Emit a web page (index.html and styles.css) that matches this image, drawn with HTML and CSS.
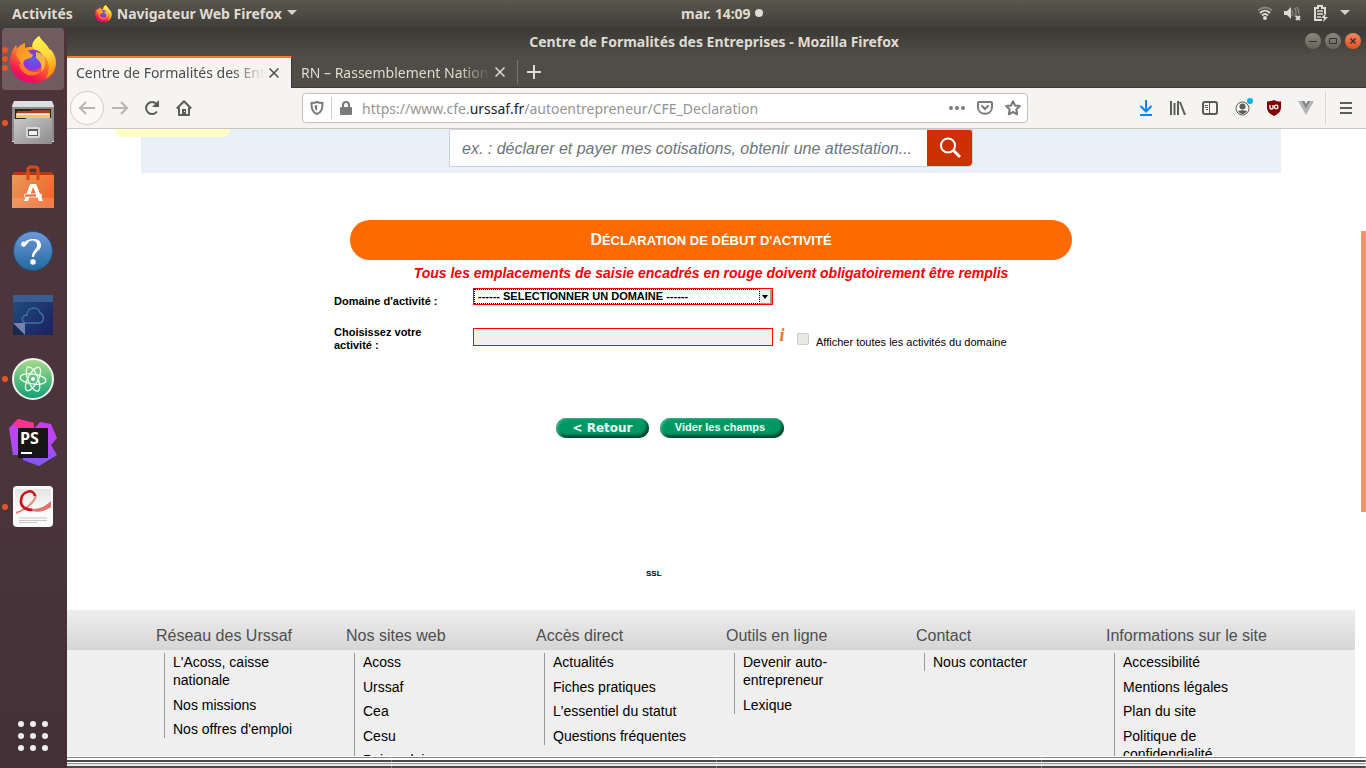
FILE: index.html
```html
<!DOCTYPE html>
<html lang="fr">
<head>
<meta charset="utf-8">
<title>Centre de Formalités des Entreprises</title>
<link rel="stylesheet" href="styles.css">
</head>
<body>
<svg class="defs" aria-hidden="true">
  <defs>
    <linearGradient id="fxBody" x1="0.8" y1="0" x2="0.3" y2="1">
      <stop offset="0" stop-color="#fff44f"/><stop offset="0.3" stop-color="#ffb62e"/><stop offset="0.6" stop-color="#ff5a36"/><stop offset="0.85" stop-color="#f0164f"/><stop offset="1" stop-color="#e30587"/>
    </linearGradient>
    <linearGradient id="fxFlame" x1="0" y1="0" x2="0.3" y2="1">
      <stop offset="0" stop-color="#fff44f"/><stop offset="0.6" stop-color="#ffd83a"/><stop offset="1" stop-color="#ff980e"/>
    </linearGradient>
    <radialGradient id="fxGlobe" cx="0.5" cy="0.5" r="0.6">
      <stop offset="0" stop-color="#5a5fe8"/><stop offset="0.5" stop-color="#7542e5"/><stop offset="1" stop-color="#a02ad8"/>
    </radialGradient>
    <linearGradient id="fxHead" x1="0" y1="0" x2="1" y2="1">
      <stop offset="0" stop-color="#ff8a25"/><stop offset="1" stop-color="#ffb02a"/>
    </linearGradient>
    <symbol id="firefox" viewBox="0 0 46 47">
      <path fill="url(#fxBody)" d="M29 0c3 5 8 8 10 13 2 0 3 2 3 2 3 4 4 8 4 12 0 12-10 20-23 20S0 38 0 26C0 18 3 13 6 9l1 4c2-3 5-5 8-6l0 5c2-1 4-1 7-1 0-5 3-8 7-11z"/>
      <path fill="url(#fxFlame)" d="M29 0c2 5 8 8 10 13 6 5 7 11 6 17-1 6-5 10-9 12 4-7 4-16-1-21-3-4-9-5-12-9-1-5 2-9 6-12z"/>
      <circle cx="23" cy="24" r="10.500" fill="url(#fxGlobe)"/>
      <path fill="url(#fxHead)" d="M6 19c1-6 5-9 9-12v5c3 2 4 5 8 7-1 4-6 3-9 6-1 1-1 3 0 5-4-2-5-7-8-11z"/>
      <path fill="#ffcb30" d="M26 16c6 1 9 5 9 10 0 4-1 8-4 10 2-7-1-11-5-14z" opacity=".85"/>
      <path fill="#ff7a2c" d="M13 28c3 7 11 10 18 7-5 7-20 6-22-7z"/>
    </symbol>
    <linearGradient id="gFile" x1="0" y1="0" x2="1" y2="1"><stop offset="0" stop-color="#c9c9c9"/><stop offset="1" stop-color="#8c8c8c"/></linearGradient>
    <linearGradient id="gBag" x1="0" y1="0" x2="1" y2="0.6"><stop offset="0" stop-color="#e89a58"/><stop offset="1" stop-color="#f0682c"/></linearGradient>
    <linearGradient id="gHelp" x1="0" y1="0" x2="0" y2="1"><stop offset="0" stop-color="#7098dc"/><stop offset="1" stop-color="#226a9e"/></linearGradient>
    <linearGradient id="gCloud" x1="0" y1="0" x2="1" y2="1"><stop offset="0" stop-color="#1f5080"/><stop offset="1" stop-color="#1d1f60"/></linearGradient>
    <linearGradient id="gAtom" x1="0" y1="0" x2="0" y2="1"><stop offset="0" stop-color="#a9dc8a"/><stop offset="1" stop-color="#109f74"/></linearGradient>
    <linearGradient id="gPs" x1="0" y1="0" x2="0" y2="1"><stop offset="0" stop-color="#c93df0"/><stop offset="0.6" stop-color="#b14af7"/><stop offset="1" stop-color="#7b58ff"/></linearGradient>
    <linearGradient id="gPaper" x1="0" y1="0" x2="0" y2="1"><stop offset="0" stop-color="#e4e4e4"/><stop offset="1" stop-color="#ffffff"/></linearGradient>
  </defs>
</svg>

<header class="panel">
  <div class="panel-left">
    <button class="panel-btn">Activités</button>
    <button class="panel-btn app-menu"><svg width="17" height="17"><use href="#firefox"/></svg>Navigateur Web Firefox<svg width="10" height="6" viewBox="0 0 10 6"><path fill="#d4d2cd" d="M0 0h10L5 5z"/></svg></button>
  </div>
  <div class="clock">mar. 14:09<span class="dot"></span></div>
  <div class="panel-right">
    <svg width="14" height="14" viewBox="0 0 14 14" fill="none" stroke="#dfdbd2" stroke-width="2"><path stroke="#85837e" d="M0 4.500C4 .500 10 .500 14 4.500"/><path d="M2 7c3-3 7-3 10 0M4 9.500c2-2 4-2 6 0"/><circle cx="7" cy="12" r="1" stroke-width="2"/></svg>
    <svg width="18" height="15" viewBox="0 0 18 15"><path fill="#dfdbd2" d="M0 5h3l4-4v12L3 9H0z"/><path stroke="#85837e" stroke-width="1.500" fill="none" d="M8 4c1 2 1 4 0 6M10.500 2c2 3 2 6 0 9M12.500 1c2 2 2.500 5 2 7"/><path stroke="#dfdbd2" stroke-width="2" d="M12 10l4 4m0-4l-4 4"/></svg>
    <svg width="14" height="17" viewBox="0 0 14 17"><path fill="none" stroke="#dfdbd2" stroke-width="2" d="M8 15H1V3h3V1h4v2h3v6"/><path stroke="#dfdbd2" stroke-width="1.500" d="M3 6h6M3 9h6M3 12h4"/><path fill="#dfdbd2" d="M12 8l-5 5h3l-1 4 5-5h-3z"/></svg>
    <svg width="10" height="6" viewBox="0 0 10 6"><path fill="#d4d2cd" d="M0 0h10L5 5z"/></svg>
  </div>
</header>

<div class="workspace">
  <nav class="dock" aria-label="Applications">
    <button class="launcher active" aria-label="Firefox"><span class="pips"><i></i><i></i><i></i></span><svg width="46" height="47"><use href="#firefox"/></svg></button>
    <button class="launcher" aria-label="Fichiers"><span class="pips"><i></i></span><svg width="42" height="44" viewBox="0 0 42 44"><path fill="#dedede" d="M2 0h38l2 5v36H0V5z"/><path fill="#8d8d8d" d="M0 6h42v34H0z"/><path fill="#262626" d="M3 8h36v10H3z"/><path fill="#a8401c" d="M5 10h13l2-1h18v8H5z"/><path fill="#ffbe70" d="M4 12h34v5H4z"/><path fill="#fff0d0" d="M5 13h32v1H5z"/><path fill="url(#gFile)" d="M2 18h11l2-1h25v26H2z"/><rect x="14" y="26" width="14" height="11" rx="2" fill="#d8d8d8"/><rect x="16" y="28" width="10" height="7" fill="#5d5d5d"/><path fill="#f0f0f0" d="M17 30h8v4h-8z"/></svg></button>
    <button class="launcher" aria-label="Logiciels"><svg width="42" height="44" viewBox="0 0 42 44"><path fill="#b63b0c" d="M2 7h38l2 3H0z"/><path fill="url(#gBag)" d="M0 10h42v33H0z"/><path fill="#fff" opacity=".15" d="M0 33h42v10H0z"/><path fill="none" stroke="#d84a14" stroke-width="3" d="M16 15V5q0-3 3-3h4q3 0 3 3v10"/><path fill="#fff" d="M18 19h6l7 17h-4l-6-14-5 14h-4z"/><path stroke="#fff" stroke-width="4" stroke-linecap="round" d="M14 30.500h14"/><path stroke="#ea6328" stroke-width="2" d="M13 30.500h11"/></svg></button>
    <button class="launcher" aria-label="Aide"><svg width="42" height="42" viewBox="0 0 42 42"><circle cx="21" cy="21" r="19.500" fill="url(#gHelp)" stroke="#1d5583"/><path fill="#fff" d="M14 15a2.500 2.500 0 1 1-1-3c1-3 16-6 16 3 0 6-6 6-7 12h-2c0-7 5-7 5-12 0-6-9-5-9-2z"/><circle cx="21" cy="32" r="2.800" fill="#fff"/></svg></button>
    <button class="launcher" aria-label="Nuage"><svg width="40" height="40" viewBox="0 0 40 40"><path fill="url(#gCloud)" d="M0 0h40v40H0z"/><path fill="#3b5c91" d="M0 0h40v7H0z"/><path fill="none" stroke="#3c70a6" stroke-width="1.500" d="M13 28c-5 0-5-8 1-8 0-9 12-9 13-2 5 2 4 10-1 10z"/><path fill="#1c2750" d="M0 28h12v12H0z"/><path fill="#7680a8" d="M0 28h12v12z"/></svg></button>
    <button class="launcher" aria-label="Atom"><span class="pips"><i></i></span><svg width="42" height="42" viewBox="0 0 42 42"><circle cx="21" cy="21" r="20" fill="url(#gAtom)" stroke="#f2f2f0" stroke-width="2"/><g fill="none" stroke="#f0fff0" stroke-width="1.300"><ellipse cx="21" cy="21" rx="13" ry="5" transform="rotate(8 21 21)"/><ellipse cx="21" cy="21" rx="13" ry="5" transform="rotate(68 21 21)"/><ellipse cx="21" cy="21" rx="13" ry="5" transform="rotate(118 21 21)"/></g><circle cx="21" cy="21" r="2" fill="#fff"/></svg></button>
    <button class="launcher" aria-label="PhpStorm"><svg width="48" height="48" viewBox="0 0 48 48"><path fill="url(#gPs)" d="M0 9l9-9 16 4v6l6-7 11 2 6 14-6 7 6 10-18 11-16-6v-5H4z"/><path fill="#ff318c" d="M4 5l5-5 16 4v6H10z"/><path fill="#161616" d="M9 9h30v30H9z"/><path fill="#fff" d="M12 33h11v2H12z"/><text x="11" y="25" class="ps">PS</text></svg></button>
    <button class="launcher" aria-label="Document Viewer"><span class="pips"><i></i></span><svg width="42" height="42" viewBox="0 0 42 42"><rect x="1" y="0" width="40" height="41" rx="4" fill="#fafafa"/><path fill="url(#gPaper)" d="M3 3h36v24H3z"/><path fill="none" stroke="#e78882" stroke-width="2" d="M4 27c9-3 19-11 20-18"/><path fill="none" stroke="#cf0e13" stroke-width="2.500" d="M23 10c-1-8-13-5-14 4-1 7 5 10 12 10"/><path fill="#e4716c" d="M20 23c8 0 14-3 19-8v6c-6 4-12 6-19 4z"/><path stroke="#c8c8c8" d="M7 32h28M7 34.500h28M7 36.500h18"/></svg></button>
    <button class="apps" aria-label="Afficher les applications"><i></i><i></i><i></i><i></i><i></i><i></i><i></i><i></i><i></i></button>
  </nav>

  <div class="browser">
    <div class="titlebar">
      <h1 class="wtitle">Centre de Formalités des Entreprises - Mozilla Firefox</h1>
      <div class="wbtns">
        <button aria-label="Réduire"><svg width="8" height="8"><path stroke="#35342f" d="M0 4.500h8"/></svg></button>
        <button aria-label="Agrandir"><svg width="8" height="8"><path fill="none" stroke="#35342f" d="M.5 1.500h7v5h-7z"/></svg></button>
        <button class="wclose" aria-label="Fermer"><svg width="8" height="8"><path stroke="#35342f" stroke-width="1.500" d="M1.500 1.500l5 5m0-5l-5 5"/></svg></button>
      </div>
    </div>
    <div class="tabs">
      <div class="tab current"><span class="tlabel">Centre de Formalités des Entreprises</span><button aria-label="Fermer l'onglet"><svg width="10" height="10"><path d="M.5.5l9 9m0-9l-9 9"/></svg></button></div>
      <div class="tab"><span class="tlabel">RN – Rassemblement National</span><button aria-label="Fermer l'onglet"><svg width="10" height="10"><path d="M.5.5l9 9m0-9l-9 9"/></svg></button></div>
      <button class="newtab" aria-label="Nouvel onglet"><svg width="14" height="14"><path d="M7 0v14M0 7h14"/></svg></button>
    </div>
    <div class="toolbar">
      <button class="back" aria-label="Précédent"><svg width="16" height="14" viewBox="0 0 16 14"><path d="M16 7H1.500M7 1L1 7l6 6"/></svg></button>
      <button class="fwd" aria-label="Suivant"><svg width="16" height="14" viewBox="0 0 16 14"><path d="M0 7h14.500M9 1l6 6-6 6"/></svg></button>
      <button class="tool" aria-label="Actualiser"><svg width="16" height="16" viewBox="0 0 16 16"><path fill="none" stroke="#5c5c5b" stroke-width="2" d="M13 11.500A6 6 0 1 1 12.500 4"/><path fill="#5c5c5b" d="M15 0v7H8z"/></svg></button>
      <button class="tool" aria-label="Accueil"><svg width="16" height="16" viewBox="0 0 16 16"><path fill="none" stroke="#5c5c5b" stroke-width="2" stroke-linejoin="round" d="M.8 8.500L8 1.300l7.200 7.200M3 7.500V15h10V7.500"/><path fill="#5c5c5b" d="M6 9h4v6H6z"/><path fill="#f4f3f2" d="M8 11h1v1H8z"/></svg></button>
      <div class="urlbar">
        <svg width="14" height="14" viewBox="0 0 14 14"><path fill="none" stroke="#7a7a7a" stroke-width="2" d="M7 1c2 1 4 1 5.500 1C12.500 7 12 11 7 13 2 11 1.500 7 1.500 2 3 2 5 2 7 1z"/><path fill="#7a7a7a" d="M7 4v6c-2-1-2.500-3-2.500-5.500z"/></svg>
        <span class="usep"></span>
        <svg width="12" height="14" viewBox="0 0 12 14"><path fill="none" stroke="#7a7a7a" stroke-width="2" d="M3 7V4c0-4 6-4 6 0v3"/><rect y="6" width="12" height="8" rx="1" fill="#7a7a7a"/></svg>
        <span class="url">https://www.cfe.<b>urssaf.fr</b>/autoentrepreneur/CFE_Declaration</span>
        <svg width="16" height="4" viewBox="0 0 16 4" fill="#7a7a7a"><circle cx="2" cy="2" r="2"/><circle cx="8" cy="2" r="2"/><circle cx="14" cy="2" r="2"/></svg>
        <svg width="16" height="14" viewBox="0 0 16 14" fill="none" stroke="#7a7a7a" stroke-width="2"><path d="M2 1h12q1 0 1 1v4c0 9-14 9-14 0V2q0-1 1-1z"/><path stroke-linecap="round" d="M5 5l3 3 3-3"/></svg>
        <svg width="16" height="16" viewBox="0 0 16 16"><path fill="none" stroke="#7a7a7a" stroke-width="2" stroke-linejoin="round" d="M8 1.200l2 4.300 4.800.6-3.500 3.300.9 4.900L8 12l-4.200 2.300.9-4.900L1.200 6.100 6 5.500z"/></svg>
      </div>
      <div class="tools">
        <button aria-label="Téléchargements"><svg width="14" height="16" viewBox="0 0 14 16"><path fill="none" stroke="#0a84ff" stroke-width="2" d="M7 0v11M1.500 6L7 11.500 12.500 6M1 15h12"/></svg></button>
        <button aria-label="Bibliothèque"><svg width="16" height="14" viewBox="0 0 16 14"><path stroke="#5c5c5b" stroke-width="2" d="M1 0v14M4.500 2v12M8 0v14M10 1l5 13"/></svg></button>
        <button aria-label="Panneaux latéraux"><svg width="16" height="14" viewBox="0 0 16 14"><rect x="1" y="1" width="14" height="12" rx="2" fill="none" stroke="#5c5c5b" stroke-width="2"/><path stroke="#5c5c5b" d="M7.500 1v12M3 4.500h3M3 6.500h3M4 8.500h2"/></svg></button>
        <button class="account" aria-label="Compte"><svg width="15" height="15" viewBox="0 0 15 15"><circle cx="7.500" cy="7.500" r="6.500" fill="none" stroke="#5c5c5b"/><circle cx="7.500" cy="5.500" r="3" fill="#5c5c5b"/><path fill="#5c5c5b" d="M3 10c3-1 6-1 9 0-2 4-7 4-9 0z"/></svg><span class="notice"></span></button>
        <button aria-label="uBlock"><svg width="14" height="16" viewBox="0 0 14 16"><path fill="#800000" d="M7 0c2 1 4 1.500 7 1.500V7c0 5-3 7-7 9-4-2-7-4-7-9V1.500C3 1.500 5 1 7 0z"/><path fill="none" stroke="#fff" stroke-width="1.300" d="M3 5v3q0 1 1.500 1T6 8V5"/><circle cx="9.200" cy="7" r="1.800" fill="none" stroke="#fff" stroke-width="1.300"/></svg></button>
        <button aria-label="Vue"><svg width="16" height="14" viewBox="0 0 16 14"><path fill="#b5b5b5" d="M0 0h3.500L8 8l4.500-8H16L8 14z"/><path fill="#868686" d="M3.500 0h3L8 3l1.500-3h3L8 8z"/></svg></button>
      </div>
      <button class="burger" aria-label="Menu"><svg width="12" height="12"><path stroke="#5c5c5b" stroke-width="2" d="M0 1h12M0 6h12M0 11h12"/></svg></button>
    </div>

    <main class="page">
      <div class="yellow"></div>
      <div class="thumb"></div>
      <div class="search-band">
        <form class="search">
          <input type="text" aria-label="Recherche" placeholder="ex. : déclarer et payer mes cotisations, obtenir une attestation...">
          <button type="button" aria-label="Rechercher"><svg width="22" height="22" viewBox="0 0 22 22"><circle cx="9" cy="8.500" r="7" fill="none" stroke="#fff" stroke-width="2"/><path stroke="#fff" stroke-width="3" d="M14 13l7 7"/></svg></button>
        </form>
      </div>
      <form class="declaration">
        <h2 class="pill">Déclaration de début d'activité</h2>
        <p class="warning">Tous les emplacements de saisie encadrés en rouge doivent obligatoirement être remplis</p>
        <div class="row first">
          <label for="domaine">Domaine d'activité :</label>
          <span class="selectwrap"><select id="domaine"><option>------ SELECTIONNER UN DOMAINE ------</option></select><span class="arrow"></span></span>
        </div>
        <div class="row second">
          <label for="activite">Choisissez votre activité :</label>
          <input id="activite" class="field" type="text" disabled>
          <span class="info">i</span>
          <input id="toutes" class="check" type="checkbox" disabled>
          <label class="plain" for="toutes">Afficher toutes les activités du domaine</label>
        </div>
        <div class="actions">
          <button type="button" class="green retour">&lt; Retour</button>
          <button type="button" class="green vider">Vider les champs</button>
        </div>
        <p class="ssl">SSL</p>
      </form>
      <footer class="footer">
        <div class="cols">
          <section><h3>Réseau des Urssaf</h3><ul><li><a href="#">L'Acoss, caisse nationale</a></li><li><a href="#">Nos missions</a></li><li><a href="#">Nos offres d'emploi</a></li></ul></section>
          <section><h3>Nos sites web</h3><ul><li><a href="#">Acoss</a></li><li><a href="#">Urssaf</a></li><li><a href="#">Cea</a></li><li><a href="#">Cesu</a></li><li><a href="#">Pajemploi</a></li></ul></section>
          <section><h3>Accès direct</h3><ul><li><a href="#">Actualités</a></li><li><a href="#">Fiches pratiques</a></li><li><a href="#">L'essentiel du statut</a></li><li><a href="#">Questions fréquentes</a></li></ul></section>
          <section><h3>Outils en ligne</h3><ul><li><a href="#">Devenir auto-entrepreneur</a></li><li><a href="#">Lexique</a></li></ul></section>
          <section><h3>Contact</h3><ul><li><a href="#">Nous contacter</a></li></ul></section>
          <section><h3>Informations sur le site</h3><ul><li><a href="#">Accessibilité</a></li><li><a href="#">Mentions légales</a></li><li><a href="#">Plan du site</a></li><li><a href="#">Politique de confidendialité</a></li></ul></section>
        </div>
      </footer>
    </main>
    <div class="edge"><span></span><span></span><span></span><span></span></div>
  </div>
</div>
</body>
</html>
```
FILE: styles.css
```css
* { box-sizing: border-box; }
body { margin: 0; height: 100vh; display: flex; flex-direction: column; overflow: hidden; font-family: "Liberation Sans", Arial, sans-serif; background: #4a3338; }
button { border: 0; padding: 0; margin: 0; background: none; font: inherit; color: inherit; display: flex; align-items: center; justify-content: center; }
svg { display: block; flex: none; }
h1, h2, h3, p, ul { margin: 0; padding: 0; }
.defs { position: absolute; width: 0; height: 0; }

.panel { flex: none; height: 28px; display: grid; grid-template-columns: 50% auto 1fr; align-items: center; padding: 0 16px 2px 12px; background: linear-gradient(#5a574e, #3e3d38); color: #dfdbd2; font: bold 14px "Noto Sans", sans-serif; }
.panel-left { display: flex; gap: 22px; align-items: center; }
.app-menu { gap: 5px; }
.clock { display: flex; align-items: center; gap: 4px; }
.dot { width: 8px; height: 8px; border-radius: 50%; background: #dfdbd2; }
.panel-right { display: flex; justify-content: flex-end; align-items: center; gap: 12px; }

.workspace { flex: 1; min-height: 0; display: flex; }
.dock { flex: none; width: 67px; display: flex; flex-direction: column; gap: 2px; background: linear-gradient(#4d343a, #4b353c 55%, #413136); }
.launcher { position: relative; width: 62px; height: 62px; margin-left: 2px; border-radius: 4px; }
.launcher.active { background: #705b60; }
.pips { position: absolute; left: 0; top: 0; bottom: 0; display: flex; flex-direction: column; justify-content: center; gap: 3px; }
.pips i { width: 6px; height: 6px; border-radius: 50%; background: #e95420; }
.ps { font: bold 16px "Open Sans", sans-serif; fill: #fff; }
.apps { margin: auto auto 17px 18px; display: grid; grid-template-columns: repeat(3, 6px); gap: 6px; }
.apps i { width: 6px; height: 6px; border-radius: 50%; background: #eee; }

.browser { flex: 1; min-width: 0; display: flex; flex-direction: column; background: #504d46; }
.titlebar { flex: none; height: 28px; display: grid; grid-template-columns: 1fr auto 1fr; align-items: center; padding: 0 5px 2px 0; background: linear-gradient(#3a3934, #504d46); }
.wtitle { grid-column: 2; font: bold 14px "Noto Sans", sans-serif; color: #dfdbd2; }
.wbtns { display: flex; justify-content: flex-end; gap: 4px; }
.wbtns button { width: 16px; height: 16px; border-radius: 50%; background: linear-gradient(#8a877f, #66635b); }
.wbtns .wclose { background: linear-gradient(#f4855f, #e2501f); }

.tabs { flex: none; height: 32px; display: flex; border-bottom: 1px solid #3a3834; }
.tab { width: 225px; display: flex; align-items: center; gap: 4px; padding: 0 12px 1px 9px; color: #dfdbd2; font: 14px "Noto Sans", sans-serif; border-top: 2px solid transparent; }
.tab.current { background: #f5f4f2; color: #4c4c4c; border-top-color: #f07746; margin-bottom: -1px; border-right: 1px solid #3a3834; }
.tlabel { flex: 1; overflow: hidden; white-space: nowrap; -webkit-mask-image: linear-gradient(to left, transparent, #000 32px); mask-image: linear-gradient(to left, transparent, #000 32px); }
.tab path { stroke: currentColor; stroke-width: 1.5; }
.newtab { width: 33px; height: 24px; margin-top: 4px; border-left: 1px solid #77746c; }
.newtab path { stroke: #dfdbd2; stroke-width: 2; }

.toolbar { flex: none; height: 41px; display: flex; align-items: center; padding-left: 3px; background: #f5f4f2; border-bottom: 1px solid #c9c5c1; }
.back { width: 34px; height: 34px; border-radius: 50%; border: 1px solid #cfcdca; background: #faf9f8; }
.back path, .fwd path { fill: none; stroke: #b6b5b3; stroke-width: 2; }
.fwd, .tool { width: 32px; height: 32px; }
.urlbar { flex: 0 1 726px; min-width: 0; height: 30px; margin-left: 102px; display: flex; align-items: center; padding: 0 6px 0 7px; border: 1px solid #c5c2be; border-radius: 4px; background: #fff; }
.usep { width: 1px; height: 22px; background: #ccc; margin: 0 8px 0 7px; }
.url { flex: 1; min-width: 0; overflow: hidden; white-space: nowrap; margin-left: 10px; font: 14px "Noto Sans", sans-serif; color: #959595; }
.url b { font-weight: 400; color: #222; }
.urlbar svg + svg { margin-left: 12px; }
.tools { flex: 1; display: flex; justify-content: flex-end; padding-right: 3px; }
.tools button { width: 32px; height: 32px; position: relative; }
.notice { position: absolute; right: 5px; top: 6px; width: 6px; height: 6px; border-radius: 50%; background: #00b3f4; }
.burger { width: 41px; height: 34px; border-left: 1px solid #dbd9d6; }

.page { flex: 1; min-height: 0; position: relative; overflow: hidden; padding-right: 11px; background: #fff; }
.yellow { position: absolute; left: 48px; top: 0; width: 115px; height: 8px; border-radius: 0 0 8px 8px; background: #ffffc4; }
.thumb { position: absolute; right: 0; top: 102px; width: 5px; height: 281px; background: #f3936d; }
.search-band { max-width: 1140px; height: 44px; margin: 0 auto; background: #e9f0f8; display: flex; justify-content: center; align-items: flex-start; }
.search { display: flex; width: 524px; height: 38px; border: 1px solid #ccd0d8; border-radius: 0 0 4px 0; background: #fff; }
.search input { flex: 1; min-width: 0; border: 0; padding: 2px 12px 0; background: none; font: italic 16px "Liberation Sans", Arial, sans-serif; }
.search input::placeholder { color: #6c757d; opacity: 1; }
.search button { width: 45px; background: #cc2f00; border-radius: 0 2px 4px 0; }

.declaration { max-width: 754px; margin: 0 auto; padding-top: 47px; height: 437px; font-size: 11px; }
.pill { width: 722px; margin: 0 auto; height: 40px; border-radius: 20px; background: #ff6a00; color: #fff; font: bold 13px/40px "Liberation Sans", Arial, sans-serif; text-transform: uppercase; text-align: center; }
.pill::first-letter { font-size: 16px; }
.warning { margin-top: 4px; text-align: center; color: #f00; font: italic bold 14px/18px "Liberation Sans", Arial, sans-serif; }
.row { display: flex; align-items: flex-start; font-weight: bold; line-height: 13px; }
.row label:first-child { width: 139px; padding-right: 32px; }
.first { margin-top: 6px; }
.first label { padding-top: 7px; white-space: nowrap; }
.selectwrap { position: relative; width: 300px; height: 17px; }
select { appearance: none; display: block; width: 100%; height: 100%; border: 1px solid #f00; border-radius: 0; background: #fff; color: #000; padding: 0 4px 2px; font: bold 11px "Liberation Sans", Arial, sans-serif; outline: 1px dotted #000; outline-offset: -2px; }
.arrow { position: absolute; right: 1px; top: 1px; width: 13px; height: 15px; border: 1px solid #eee; border-right: 2px solid #999; border-bottom-color: #999; border-left: 1px dotted #000; background: #f1f0ee; pointer-events: none; }
.arrow::after { content: ""; position: absolute; left: 2px; top: 5px; border: 3px solid transparent; border-top: 4px solid #000; border-bottom: 0; }
.second { margin-top: 20px; }
.second label:first-child { margin-top: -2px; }
.field { width: 300px; height: 18px; border: 1px solid #f00; background: #f1f0ee; padding: 0; }
.info { width: 18px; text-align: center; color: #f07020; font: italic bold 18px/14px "Liberation Serif", serif; }
.check { appearance: none; width: 12px; height: 12px; margin: 5px 7px 0 6px; border: 1px solid #ccc; border-radius: 2px; background: #e8e8e7; }
.plain { font-weight: 400; padding-top: 8px; }
.actions { display: flex; gap: 11px; margin: 66px 0 0 222px; }
.green { height: 20px; border-radius: 10px; background: #009966; color: #e8fff4; box-shadow: inset 2px 1px 2px #3fae86, inset -2px -3px 3px #00482c; }
.retour { width: 93px; font: bold 12px "DejaVu Sans", sans-serif; }
.vider { width: 124px; padding: 0 4px 2px 0; font: bold 11px "Liberation Sans", Arial, sans-serif; }
.ssl { margin: 131px 0 0 312px; font-size: 8px; font-weight: bold; line-height: 10px; }

.footer { background: linear-gradient(#eee, #d5d5d5) top / 100% 40px no-repeat #efefef; min-height: 200px; }
.cols { max-width: 1140px; margin: 0 auto; display: grid; grid-template-columns: repeat(6, 1fr); align-items: start; }
.cols h3 { height: 40px; margin-bottom: 3px; padding-left: 15px; font-size: 16px; font-weight: 400; line-height: 52px; color: #4f4f4f; white-space: nowrap; }
.cols ul { list-style: none; margin: 0 20px 0 23px; padding-left: 8px; border-left: 1px solid #999; display: grid; gap: 6px; font-size: 14px; line-height: 18px; }
.cols li:nth-child(odd):not(:last-child) { padding-bottom: 1px; }
.cols a { color: #000; text-decoration: none; }
.edge { flex: none; height: 12px; display: grid; grid-template-columns: 325px 325px 325px 1fr; background: linear-gradient(#fff 1px, #858585 1px 2px, #fff 2px 4px, #484a48 4px 6px, #fff 6px 7px, #909090 7px 8px, #e6e6e6 8px 10px, #484a4c 10px); }
.edge span { border-right: 1px solid rgba(255, 255, 255, .3); }
```
